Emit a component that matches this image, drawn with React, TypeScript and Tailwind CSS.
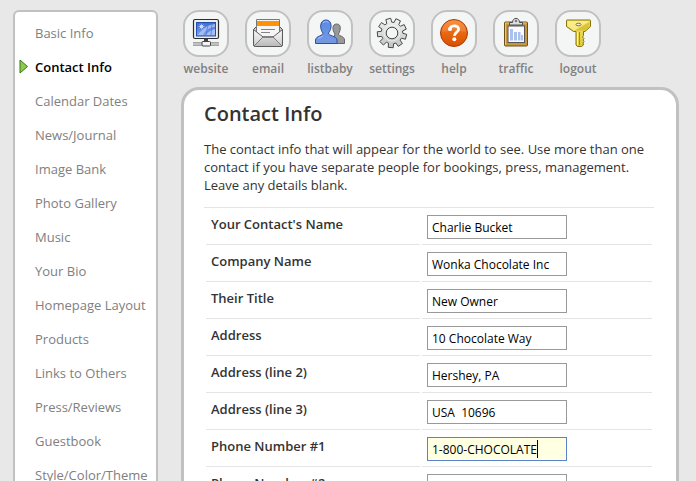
import type { ReactNode } from "react";

const gearPath = (() => {
  const teeth = 9;
  const pts: string[] = [];
  for (let i = 0; i < teeth; i++) {
    const base = (i / teeth) * Math.PI * 2 - 0.26;
    [[-0.24, 10.8], [-0.17, 14.8], [0.17, 14.8], [0.24, 10.8]].forEach(([a, r]) => {
      pts.push(`${(23 + r * Math.sin(base + a)).toFixed(2)} ${(23 - r * Math.cos(base + a)).toFixed(2)}`);
    });
  }
  return `M${pts.join("L")}ZM23 17.2a5.8 5.8 0 1 0 0 11.6a5.8 5.8 0 1 0 0-11.6Z`;
})();

function Gradient({ id, from, to }: { id: string; from: string; to: string }) {
  return (
    <defs>
      <linearGradient id={id} x1="0" y1="0" x2="0" y2="1">
        <stop offset="0" stopColor={from} />
        <stop offset="1" stopColor={to} />
      </linearGradient>
    </defs>
  );
}

const tools: { label: string; icon: ReactNode }[] = [
  {
    label: "website",
    icon: (
      <>
        <Gradient id="screen" from="#3d6ad2" to="#7fa3ee" />
        <path d="M10 33h26M10 35h26" stroke="#555" strokeWidth="1" />
        <path d="M10 34h26" stroke="#ddd" strokeWidth="1" />
        <path d="M23 28v4" stroke="#444" strokeWidth="4" />
        <rect x="19" y="31.5" width="8.5" height="4.5" rx="1" fill="#f4f4f4" stroke="#444" />
        <rect x="10.5" y="9.5" width="25" height="19" rx="1.5" fill="#efefef" stroke="#2d2d2d" strokeWidth="1.2" />
        <rect x="13.5" y="12.5" width="19" height="13.5" fill="url(#screen)" stroke="#2450b0" />
        <path d="M15 25c4-6 9-10 17-11v3c-7 1-10 4-12 8z" fill="#b5cbf6" opacity=".75" />
        <path d="M23 25c2-3 5-5 9-6v6z" fill="#a5bff5" />
        <path d="M25 15l-2 10M29 14l-1 11" stroke="#4b76d6" strokeWidth=".7" />
        <circle cx="18.500" cy="16.500" r="1.700" fill="#e4edff" />
        <path d="M18.500 13.500v6M15.500 16.500h6M16.500 14.500l4 4M20.500 14.500l-4 4" stroke="#c9dafc" strokeWidth=".6" />
      </>
    ),
  },
  {
    label: "email",
    icon: (
      <>
        <Gradient id="envelope" from="#f1f1f1" to="#b9b9b9" />
        <path d="M8.500 19.500 12 16h22l3.500 3.500v15q0 2-2 2h-25q-2 0-2-2z" fill="#ccc" stroke="#505050" />
        <path d="M11.500 9.500h23V27h-23z" fill="#f6f6f6" stroke="#777" />
        <path d="M12 11h22v5H12z" fill="#ff9207" />
        <path d="M16 19.500h14M16 22.500h9" stroke="#858585" />
        <path d="M8.500 19.500 18 27h10l9.500-7.500v15q0 2-2 2h-25q-2 0-2-2z" fill="url(#envelope)" stroke="#5b5b5b" />
        <path d="m9 36 9-9h10l9 9" fill="none" stroke="#777" />
        <path d="m9.500 21 8 6-8 8zM36.500 21l-8 6 8 8z" fill="#fff" opacity=".35" />
      </>
    ),
  },
  {
    label: "listbaby",
    icon: (
      <>
        <Gradient id="person" from="#5d8be0" to="#7599e2" />
        <path d="M28 24c-3-4-3-10 1.700-10s4.300 6 1.700 10c0 2 6.100 2 6.100 6v3.500H25z" fill="#999" stroke="#666" />
        <path d="M16 23c-3.500-4-3.500-13 3-13s6 9 2.500 13c-.500 3 8 2.500 8.500 7v3.500H8.500V30c.500-4.500 8-4 7.500-7z" fill="url(#person)" stroke="#2c50a5" />
        <path d="M16 13c1-2 4-2 5.500-.500M11 28.500l5-2.500" fill="none" stroke="#a6c2fa" />
      </>
    ),
  },
  {
    label: "settings",
    icon: (
      <>
        <Gradient id="gear" from="#f2f2f2" to="#c3c3c3" />
        <path d={gearPath} fill="url(#gear)" fillRule="evenodd" stroke="#484848" strokeLinejoin="round" />
        <circle cx="23" cy="23" r="8" fill="none" stroke="#fff" opacity=".5" />
      </>
    ),
  },
  {
    label: "help",
    icon: (
      <>
        <Gradient id="ball" from="#f98324" to="#d94d00" />
        <circle cx="23" cy="23" r="13.500" fill="url(#ball)" stroke="#a83c05" />
        <path d="M11 22a12 12 0 0 1 24 0q-12-3-24 0z" fill="#fff" opacity=".12" />
        <path d="M18.800 19.800c-.300-5 8.800-5.200 8.800-.600 0 3.300-4.300 3.200-4.100 6.600" fill="none" stroke="#fff" strokeWidth="2.800" />
        <circle cx="18.900" cy="19.200" r="1.900" fill="#fff" />
        <circle cx="23.300" cy="29.300" r="2" fill="#fff" />
      </>
    ),
  },
  {
    label: "traffic",
    icon: (
      <>
        <rect x="11.500" y="12" width="23" height="24" rx="1" fill="#c7973f" stroke="#6f5117" />
        <path d="M12.500 35V13h21" fill="none" stroke="#e7c57c" />
        <rect x="15" y="16" width="16.500" height="16.500" fill="#fafaff" stroke="#555" />
        <path d="M17 19h3v11.500h-3zM21 22h3v8.500h-3zM25 22h2.500v8.500H25zM28 25h2v5.500h-2z" fill="#a9c0f0" />
        <path d="M16.500 15v-2.500h3C19.500 7 26.500 7 26.500 12.500h3V15z" fill="#dedede" stroke="#4d4d4d" />
        <circle cx="23" cy="11" r="1.200" fill="#777" />
      </>
    ),
  },
  {
    label: "logout",
    icon: (
      <>
        <Gradient id="key" from="#f3e25c" to="#e0c93e" />
        <path d="M11.500 10.500q0-.500.500-.500h23q.500 0 .500.500v6L30 21.500h-1.500v4l-1 1.500 1.500 1.500-1 1.500 1 1.500-1 1.500.500 2-2 1.500h-4L21 35V21.500h-2.500l-7-5z" fill="url(#key)" stroke="#877313" strokeLinejoin="round" />
        <path d="M12.500 16v-5h22L19 20.500z" fill="#fff8ad" opacity=".55" />
        <path d="M34.500 12v4L30 20.500H20z" fill="#c9ae22" opacity=".55" />
        <path d="M22.500 22v13" stroke="#fff6a0" />
        <path d="M24.500 22v13" stroke="#a48d1c" />
        <ellipse cx="23.500" cy="14.500" rx="2.500" ry="1.300" fill="#eee" stroke="#877313" />
      </>
    ),
  },
];

const pages = [
  "Basic Info", "Contact Info", "Calendar Dates", "News/Journal", "Image Bank",
  "Photo Gallery", "Music", "Your Bio", "Homepage Layout", "Products",
  "Links to Others", "Press/Reviews", "Guestbook", "Style/Color/Theme",
];

const fields = [
  ["Your Contact's Name", "Charlie Bucket"],
  ["Company Name", "Wonka Chocolate Inc"],
  ["Their Title", "New Owner"],
  ["Address", "10 Chocolate Way"],
  ["Address (line 2)", "Hershey, PA"],
  ["Address (line 3)", "USA  10696"],
  ["Phone Number #1", "1-800-CHOCOLATE"],
  ["Phone Number #2", ""],
];

export default function App() {
  return (
    <div className="flex h-screen items-start gap-[23px] overflow-hidden bg-[#e8e8e8] pt-[10px] pr-[17px] pl-[13px] font-['Trebuchet_MS','Open_Sans',sans-serif] text-[13px] text-[#333]">
      <nav aria-label="Sections" className="w-[145px] shrink-0 rounded-md border-2 border-[#c1c1c1] bg-white pt-[5px] pb-3">
        <ul>
          {pages.map((page) => {
            const active = page === "Contact Info";
            return (
              <li key={page} className="flex h-[34px] items-center pl-1">
                <span className="w-4 shrink-0">
                  {active && (
                    <svg width="10" height="15" viewBox="0 0 10 15" aria-hidden="true" className="mb-1">
                      <path d="M1 1v13l7.500-6.500z" fill="#8dcb4d" stroke="#3b7510" />
                    </svg>
                  )}
                </span>
                <a href="#" aria-current={active ? "page" : undefined} className={active ? "font-semibold whitespace-nowrap text-black" : "whitespace-nowrap text-[#808080]"}>
                  {page}
                </a>
              </li>
            );
          })}
        </ul>
      </nav>

      <div className="min-w-0 flex-1">
        <nav aria-label="Tools" className="flex h-[77px] gap-3">
          {tools.map(({ label, icon }) => (
            <a key={label} href="#" className="flex w-[50px] flex-col items-center text-[12px] leading-4 font-semibold text-[#808080]">
              <span className="mb-1 rounded-[16px] border-2 border-[#c1c1c1] bg-[#f4f6f5]">
                <svg width="42" height="43" viewBox="2 2 42 43" aria-hidden="true">{icon}</svg>
              </span>
              {label}
            </a>
          ))}
        </nav>

        <main className="rounded-[18px] border-3 border-[#c1c1c1] bg-white pt-[10px] pr-[22px] pb-6 pl-5">
          <h1 className="mb-3 text-[20px] leading-7 font-semibold">Contact Info</h1>
          <p className="mb-[13px] leading-[18px]">
            The contact info that will appear for the world to see. Use more than one contact if you have separate people for bookings, press, management. Leave any details blank.
          </p>
          <table className="w-full border-separate border-spacing-[2px] border-t border-[#e4e4e4]">
            <tbody>
              {fields.map(([label, value], i) => {
                const focused = label === "Phone Number #1";
                return (
                  <tr key={label}>
                    <th scope="row" className="w-[214px] border-b border-[#e4e4e4] px-[5px] pt-1 text-left align-top leading-5 font-semibold">
                      <label htmlFor={`field-${i}`}>{label}</label>
                    </th>
                    <td className="border-b border-[#e4e4e4] p-[5px]">
                      <div className="relative w-[140px]">
                        <input
                          id={`field-${i}`}
                          defaultValue={value}
                          className={focused ? "block h-6 w-full border border-[#5a83cc] bg-[#ffffe1] px-1 text-[12px] text-black outline-none" : "block h-6 w-full border border-[#999] bg-white px-1 text-[12px] whitespace-pre text-black outline-none"}
                        />
                        {focused && <span className="absolute top-[3px] left-[110px] h-[18px] w-px bg-black" />}
                      </div>
                    </td>
                  </tr>
                );
              })}
            </tbody>
          </table>
        </main>
      </div>
    </div>
  );
}
